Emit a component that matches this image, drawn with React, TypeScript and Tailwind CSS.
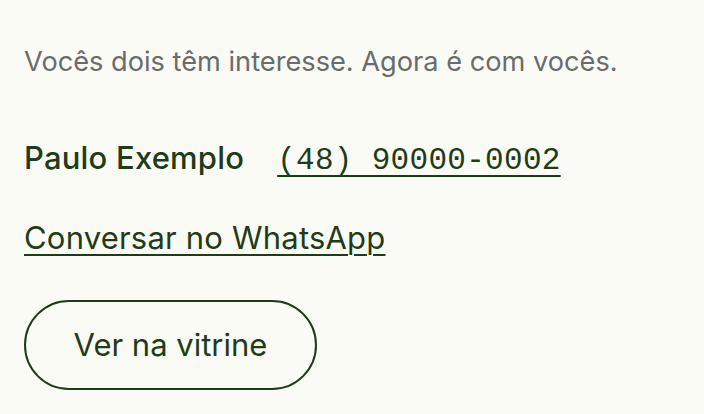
export default function App() {
  return (
    <div
      className="min-h-screen w-full bg-[#fbfbf6] px-6 pt-[42px]"
      style={{ fontFamily: 'Inter, "Noto Sans", sans-serif' }}
    >
      <p className="text-[27.2px] leading-[40px] text-[#6b6b6b]">
        Vocês dois têm interesse. Agora é com vocês.
      </p>

      <div className="mt-[56px] flex items-baseline gap-[33px] text-[#1f3b17]">
        <span className="text-[31px] font-medium leading-[40px] tracking-[0.2px]">Paulo Exemplo</span>
        <a
          href="#"
          className="text-[31px] leading-[40px] tracking-[0.3px] underline decoration-2 underline-offset-[6px]"
          style={{ fontFamily: '"Liberation Mono", monospace' }}
        >
          (48) 90000-0002
        </a>
      </div>

      <div className="mt-[37px]">
        <a
          href="#"
          className="text-[31px] leading-[40px] tracking-[0.2px] text-[#1f3b17] underline decoration-2 underline-offset-[5px]"
        >
          Conversar no WhatsApp
        </a>
      </div>

      <button className="mt-[42px] flex h-[90px] w-[293px] items-center justify-center rounded-full border-2 border-[#1f3b17] text-[31px] text-[#1f3b17]">
        Ver na vitrine
      </button>
    </div>
  );
}
